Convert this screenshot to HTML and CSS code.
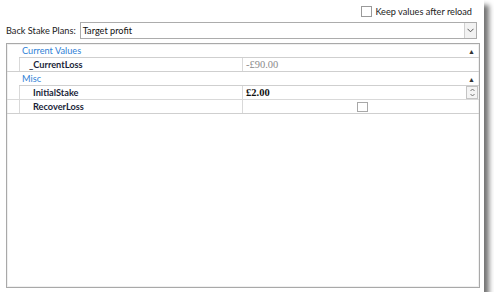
FILE: index.html
```html
<!DOCTYPE html>
<html lang="en">
<head>
    <meta charset="UTF-8">
    <title>Back Stake Plans</title>
    <link rel="stylesheet" href="styles.css">
</head>
<body>
    <div class="window">
        <!-- keep values option -->
        <div class="top-row">
            <label class="keep">
                <span class="check"></span>
                Keep values after reload
            </label>
        </div>

        <!-- plan selector -->
        <div class="plan-row">
            <span class="plan-label">Back Stake Plans:</span>
            <div class="combo">
                <span class="combo-text">Target profit</span>
                <span class="combo-btn">
                    <svg width="7" height="5" viewBox="0 0 7 5"><path d="M0.5 0.8 L3.5 3.8 L6.5 0.8" fill="none" stroke="#555" stroke-width="1"/></svg>
                </span>
            </div>
        </div>

        <!-- property grid -->
        <div class="grid">
            <div class="cat">
                <span class="cat-name">Current Values</span>
                <span class="caret">▲</span>
            </div>
            <div class="prop last">
                <span class="gutter"></span>
                <span class="name">_CurrentLoss</span>
                <span class="value readonly">-£90.00</span>
            </div>

            <div class="cat">
                <span class="cat-name">Misc</span>
                <span class="caret">▲</span>
            </div>
            <div class="prop">
                <span class="gutter"></span>
                <span class="name indent">InitialStake</span>
                <span class="value bold">£2.00
                    <span class="spin">
                        <svg width="5" height="9" viewBox="0 0 5 9"><path d="M0.5 3 L2.5 1 L4.5 3 M0.5 6 L2.5 8 L4.5 6" fill="none" stroke="#666" stroke-width="0.9"/></svg>
                    </span>
                </span>
            </div>
            <div class="prop last">
                <span class="gutter"></span>
                <span class="name indent">RecoverLoss</span>
                <span class="value center"><span class="check small"></span></span>
            </div>
        </div>
    </div>
</body>
</html>
```

FILE: styles.css
```css
body {
    margin: 0;
    background: #fff;
    font-family: Lato, "Open Sans", sans-serif;
    font-size: 9.2px;
    color: #1a1a1a;
}

/* outer window with its drop shadow */
.window {
    width: 484px;
    height: 292px;
    background: #fff;
    box-shadow: 5px 5px 5px rgba(0, 0, 0, 0.55);
    padding: 0 4px 0 6px;
    box-sizing: border-box;
    display: flex;
    flex-direction: column;
}

.top-row {
    display: flex;
    justify-content: flex-end;
    height: 22px;
    align-items: center;
    padding-right: 8px;
}

.keep {
    display: flex;
    align-items: center;
    gap: 3px;
    color: #222;
}

.check {
    width: 11px;
    height: 11px;
    border: 1px solid #9a9a9a;
    background: #fff;
    box-sizing: border-box;
}

.check.small {
    width: 11px;
    height: 10px;
    border-color: #a8a8a8;
}

.plan-row {
    display: flex;
    align-items: center;
    gap: 4px;
    height: 17px;
    padding-right: 3px;
}

.plan-label {
    color: #222;
}

.combo {
    flex: 1;
    height: 17px;
    border: 1px solid #acacac;
    box-sizing: border-box;
    display: flex;
    align-items: center;
}

.combo-text {
    flex: 1;
    padding-left: 2px;
    color: #111;
}

.combo-btn {
    width: 11px;
    height: 100%;
    border-left: 1px solid #d0d0d0;
    background: #f2f2f2;
    display: flex;
    align-items: center;
    justify-content: center;
}

/* property grid */
.grid {
    margin-top: 4px;
    flex: 1;
    margin-bottom: 4px;
    border: 1px solid #a9a9a9;
    box-shadow: inset 0 0 0 1px #f0f0f0;
}

.cat {
    height: 14px;
    display: flex;
    align-items: center;
    margin-left: 12px;
    border-bottom: 1px solid #cfcfcf;
    box-sizing: border-box;
}

.cat-name {
    flex: 1;
    color: #2f7fd6;
    padding-left: 3px;
}

.caret {
    font-size: 7px;
    color: #333;
    padding-right: 4px;
}

.prop {
    height: 14px;
    display: flex;
    border-bottom: 1px solid #d9d9d9;
    box-sizing: border-box;
}

.prop.last {
    border-bottom-color: #cfcfcf;
}

.gutter {
    width: 12px;
    border-right: 1px solid #d9d9d9;
}

.name {
    width: 223px;
    box-sizing: border-box;
    border-right: 1px solid #d9d9d9;
    font-weight: bold;
    color: #1b1f3a;
    padding-left: 9px;
    line-height: 13px;
}

.name.indent {
    padding-left: 13px;
}

.value {
    flex: 1;
    display: flex;
    align-items: center;
    padding-left: 3px;
    font-family: "Liberation Serif", serif;
    font-size: 10.5px;
}

.value.readonly {
    color: #8a8a8a;
}

.value.bold {
    font-weight: bold;
    color: #111;
}

.value.center {
    justify-content: center;
}

.spin {
    margin-left: auto;
    margin-right: 1px;
    width: 12px;
    height: 13px;
    border: 1px solid #c4c4c4;
    box-sizing: border-box;
    background: #f4f4f4;
    display: flex;
    align-items: center;
    justify-content: center;
}
```
